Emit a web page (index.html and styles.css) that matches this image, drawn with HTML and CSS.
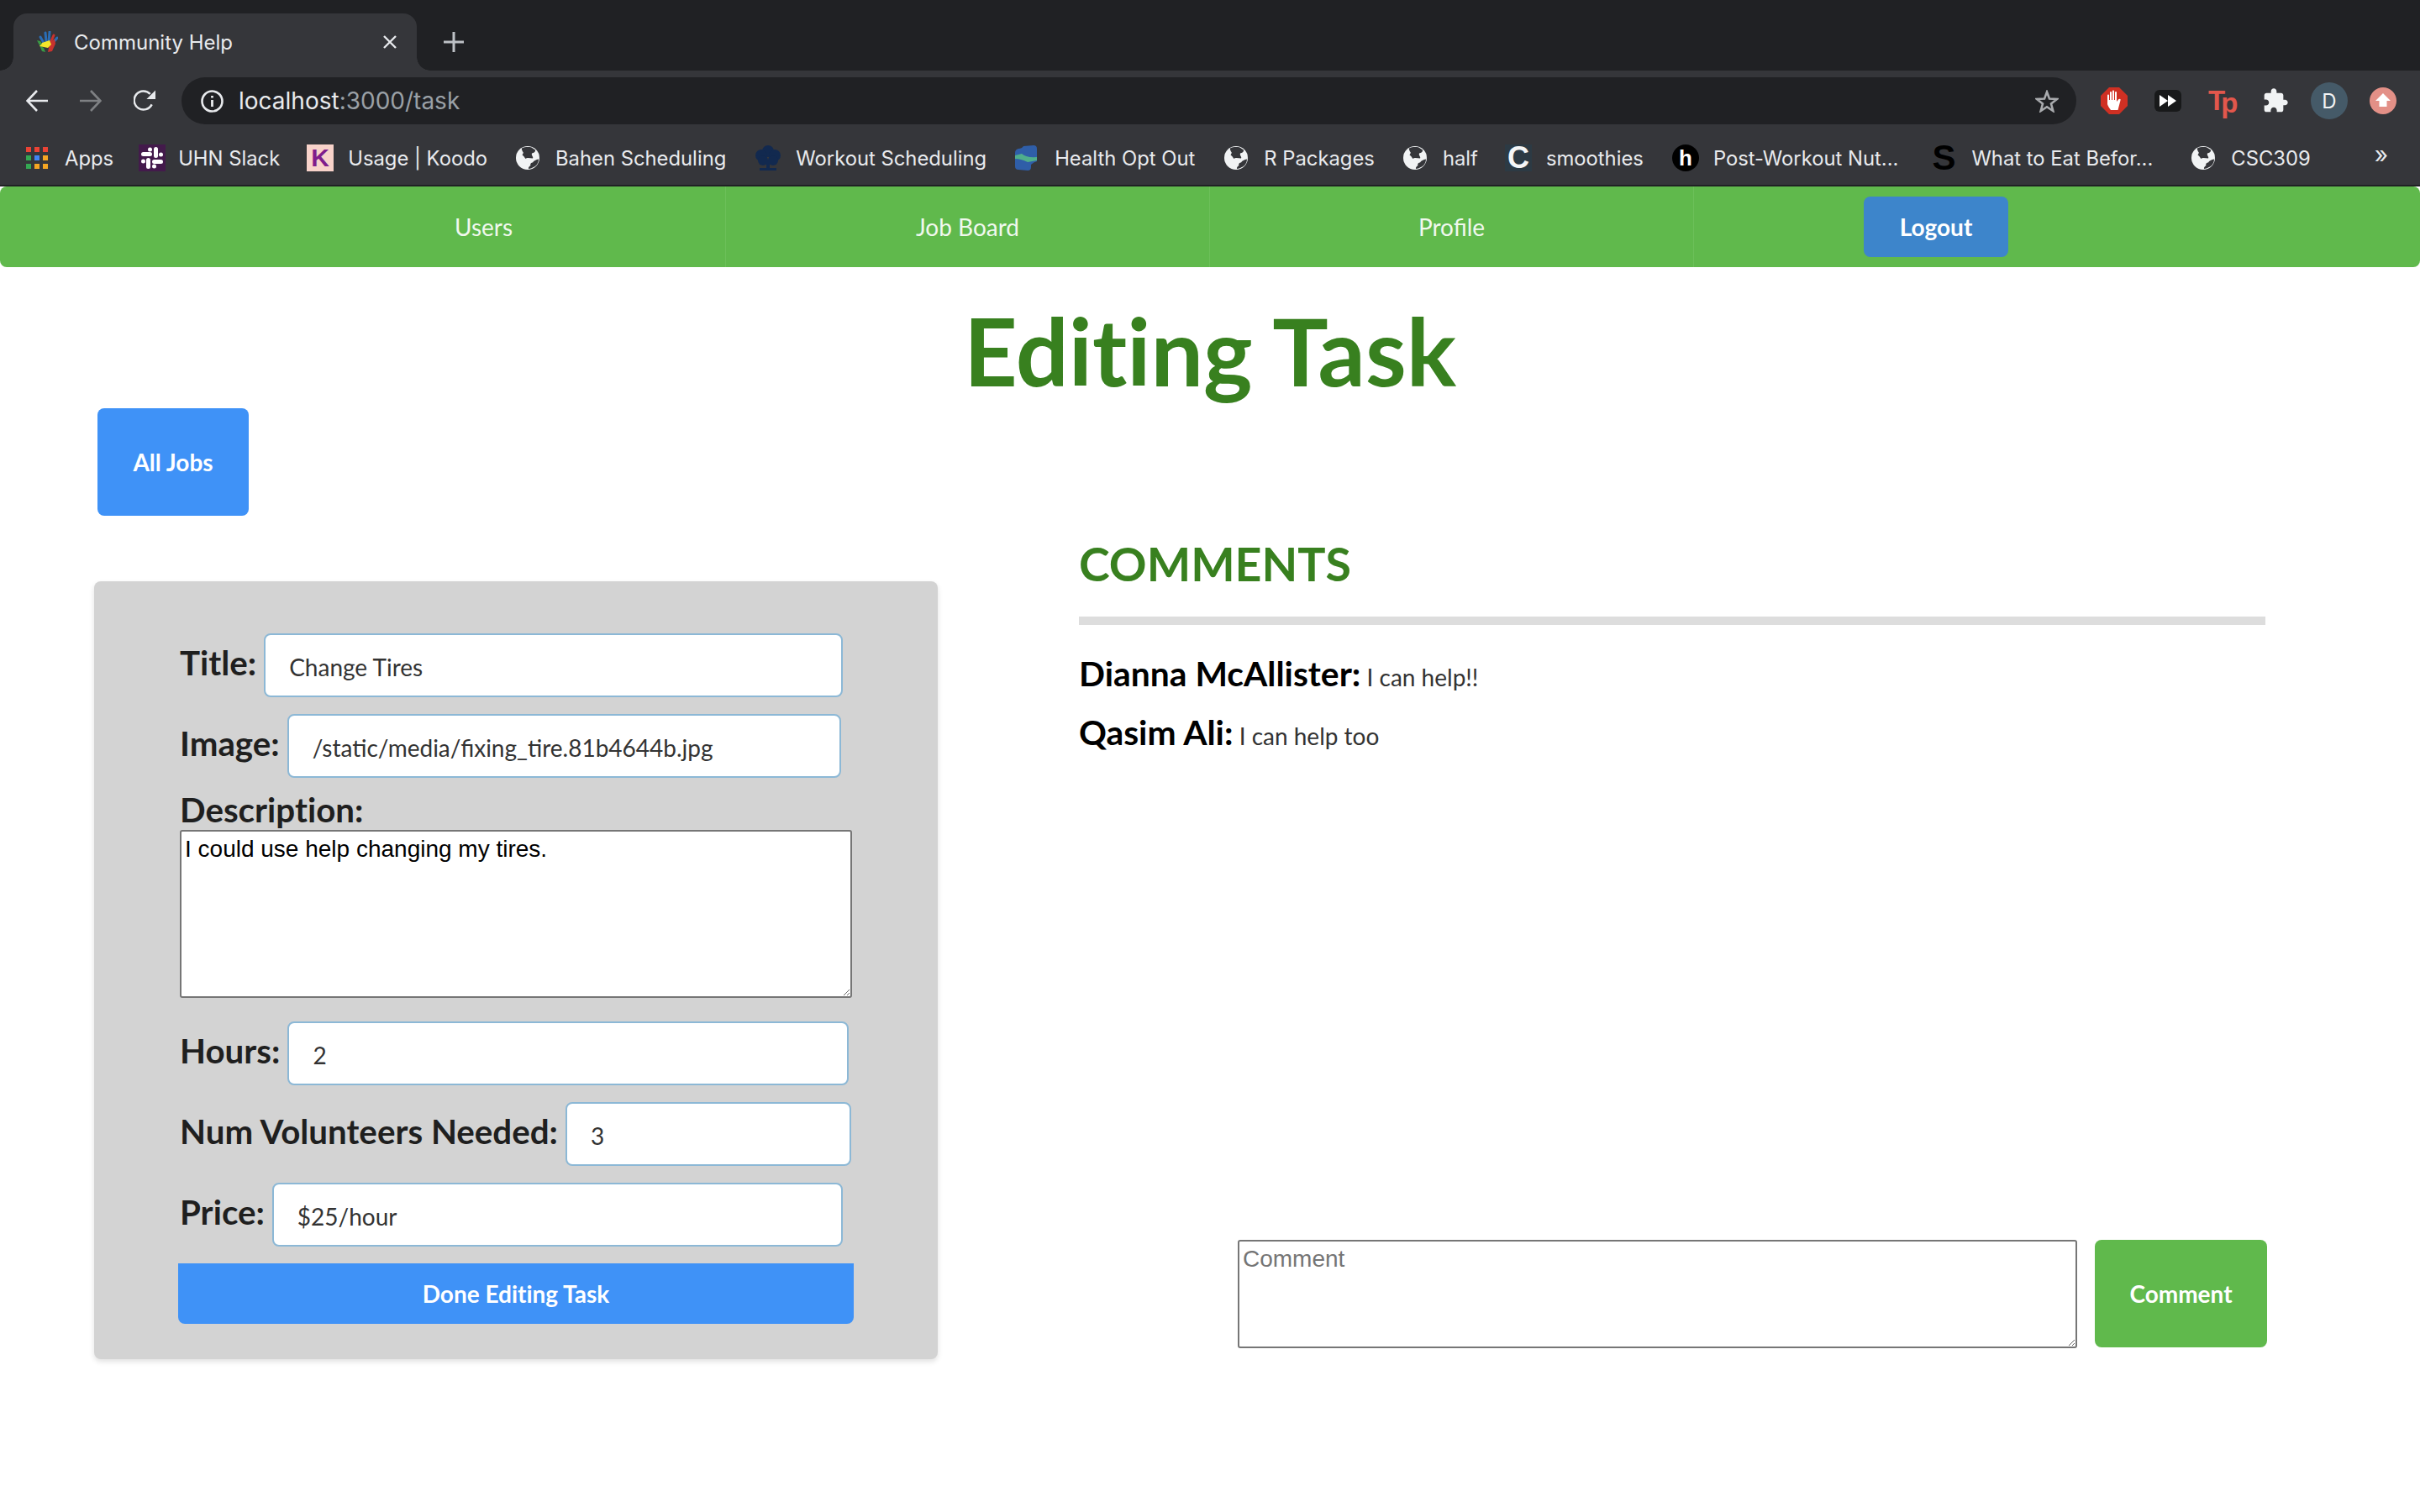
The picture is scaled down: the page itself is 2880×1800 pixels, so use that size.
FILE: index.html
```html
<!DOCTYPE html>
<html lang="en">
<head>
<meta charset="utf-8">
<title>Community Help</title>
<link rel="stylesheet" href="styles.css">
</head>
<body>
<svg class="defs" width="0" height="0" aria-hidden="true">
  <symbol id="globe" viewBox="0 0 28 28">
    <circle cx="14" cy="14" r="14" fill="#f1f3f4"/>
    <path d="M7 2.500C10 1 15 .8 18.500 1.500L23 4.500C23.500 7 21 8 19 8.500C18 11 21 12.500 20 14.500C17 14.500 13.500 13 11.500 15C10 13.500 9.500 11.500 7.500 10.500C8.500 8.500 9.500 7.500 8 6.500C7.500 5 6.500 4 7 2.500Z" fill="#35363a"/>
    <path d="M27 15.500C27 19 25 23 22 24.500C20 25.500 17 27 15 27C14.500 25 16 24 17.500 23C16.500 21 18.500 19.500 20 19.500C21 17.500 24 16 27 15.500Z" fill="#35363a"/>
  </symbol>
</svg>

<header class="browser">
  <div class="tabstrip">
    <div class="tab">
      <svg class="favicon" viewBox="0 0 25 26">
        <path d="M8 14 4 7" stroke="#2a6db5" stroke-width="3" stroke-linecap="round"/>
        <path d="M11 12 10 2" stroke="#2a6db5" stroke-width="3" stroke-linecap="round"/>
        <path d="M14 13 15 1" stroke="#2a6db5" stroke-width="3" stroke-linecap="round"/>
        <path d="M16 14 20 5" stroke="#c8322e" stroke-width="3" stroke-linecap="round"/>
        <path d="M18 15 24 8" stroke="#2a6db5" stroke-width="3" stroke-linecap="round"/>
        <path d="M15 15 21 9 22 15 18 24 13 25Z" fill="#c8322e"/>
        <path d="M3 17 8 20 10 25 6 24Z" fill="#3a9a46"/>
        <path d="M6 14 15 11 17 16 13 20 3 18Z" fill="#f3e62a"/>
        <path d="M0 11 4 12 6 15 3 17Z" fill="#3a9a46"/>
      </svg>
      <span class="tab-title">Community Help</span>
      <svg class="tab-close" viewBox="0 0 16 16"><path d="M1 1 15 15M15 1 1 15" stroke="#e8eaed" stroke-width="2.400"/></svg>
    </div>
    <svg class="new-tab" viewBox="0 0 24 24"><path d="M12 0V24M0 12H24" stroke="#bdc1c6" stroke-width="3"/></svg>
  </div>

  <div class="toolbar">
    <svg class="nav-icon" viewBox="0 0 26 26"><path d="M26 13H2M13 1 1.500 13 13 25" fill="none" stroke="#e8eaed" stroke-width="2.600"/></svg>
    <svg class="nav-icon" viewBox="0 0 26 26"><path d="M0 13H24M13 1 24.500 13 13 25" fill="none" stroke="#7f8184" stroke-width="2.600"/></svg>
    <svg class="nav-icon" viewBox="0 0 27 26"><path d="M22.500 17.500A11.500 11.500 0 1 1 20.500 4.500" fill="none" stroke="#e8eaed" stroke-width="2.600"/><path d="M27 0V11H16Z" fill="#e8eaed"/></svg>
    <div class="omnibox">
      <svg class="info" viewBox="0 0 27 27"><circle cx="13.500" cy="13.500" r="12" fill="none" stroke="#e8eaed" stroke-width="2.600"/><path d="M13.500 12V20M13.500 7V9.500" stroke="#e8eaed" stroke-width="2.800"/></svg>
      <span class="url">localhost<span class="url-rest">:3000/task</span></span>
      <svg class="star" viewBox="0 0 28 27"><path d="M14 2.500 17 10.600 26 11 19 16.500 21.300 25 14 20.200 6.700 25 9 16.500 2 11 11 10.600Z" fill="none" stroke="#a9abae" stroke-width="2.600"/></svg>
    </div>
    <div class="extensions">
      <svg class="ext" viewBox="0 0 32 32">
        <path d="M10 0H22L32 10V22L22 32H10L0 22V10Z" fill="#cf3023"/>
        <path d="M12 27C10 24 8.500 22 8 20V9.500C8 8 10 8 10 9.500V15H11V6C11 4.500 13 4.500 13 6V15H14V4.500C14 3 16 3 16 4.500V15H17V6C17 4.500 19 4.500 19 6V17L21 14.500C22 13 24.500 14 23.500 15.500L20.500 27Z" fill="#fff"/>
      </svg>
      <svg class="ext ext-ff" viewBox="0 0 32 26">
        <rect width="32" height="26" rx="6" fill="#18191a"/>
        <path d="M6 6 16 13 6 20ZM16 6 26 13 16 20Z" fill="#fff"/>
      </svg>
      <span class="ext ext-tp">T<span class="ext-tp-p">p</span></span>
      <svg class="ext" viewBox="0 0 24 24"><path d="M20.500 11H19V7c0-1.100-.9-2-2-2h-4V3.500C13 2.120 11.880 1 10.500 1S8 2.120 8 3.500V5H4c-1.100 0-1.990.9-1.990 2v3.800H3.500c1.490 0 2.700 1.210 2.700 2.700s-1.210 2.700-2.700 2.700H2V20c0 1.100.9 2 2 2h3.800v-1.500c0-1.490 1.210-2.700 2.700-2.700 1.490 0 2.700 1.210 2.700 2.700V22H17c1.100 0 2-.9 2-2v-4h1.500c1.380 0 2.500-1.120 2.500-2.500S21.880 11 20.500 11z" fill="#f1f3f4"/></svg>
      <span class="avatar">D</span>
      <svg class="ext" viewBox="0 0 32 32"><circle cx="16" cy="16" r="16" fill="#e39087"/><path d="M16 7 25 16H20.500V23H11.500V16H7Z" fill="#fff"/></svg>
    </div>
  </div>

  <nav class="bookmarks">
    <a class="bm">
      <svg class="bm-apps" viewBox="0 0 26 26">
        <rect width="6" height="6" fill="#ea4335"/><rect x="10" width="6" height="6" fill="#ea4335"/><rect x="20" width="6" height="6" fill="#ea4335"/>
        <rect y="10" width="6" height="6" fill="#34a853"/><rect x="10" y="10" width="6" height="6" fill="#4285f4"/><rect x="20" y="10" width="6" height="6" fill="#f5a623"/>
        <rect y="20" width="6" height="6" fill="#34a853"/><rect x="10" y="20" width="6" height="6" fill="#f5a623"/><rect x="20" y="20" width="6" height="6" fill="#f5a623"/>
      </svg>
      <span>Apps</span>
    </a>
    <a class="bm">
      <svg class="bm-icon bm-slack" viewBox="0 0 32 32">
        <rect width="32" height="32" fill="#431a4b"/>
        <g fill="#fff">
          <circle cx="13.500" cy="6" r="2.500"/><rect x="3" y="9" width="13" height="5" rx="2.500"/>
          <rect x="18" y="3" width="5" height="13" rx="2.500"/><circle cx="26.500" cy="12" r="2.500"/>
          <rect x="16" y="18" width="13" height="5" rx="2.500"/><circle cx="18.500" cy="26" r="2.500"/>
          <rect x="9" y="16" width="5" height="13" rx="2.500"/><circle cx="5.500" cy="20" r="2.500"/>
        </g>
      </svg>
      <span>UHN Slack</span>
    </a>
    <a class="bm"><span class="bm-letter bm-koodo">K</span><span>Usage | Koodo</span></a>
    <a class="bm"><svg class="bm-globe"><use href="#globe"/></svg><span>Bahen Scheduling</span></a>
    <a class="bm">
      <svg class="bm-icon" viewBox="0 0 32 32"><g fill="#12294f"><circle cx="16" cy="8" r="7"/><circle cx="8" cy="13" r="7"/><circle cx="24" cy="13" r="7"/><circle cx="10" cy="19" r="6"/><circle cx="22" cy="19" r="6"/><rect x="14" y="18" width="4" height="11"/><rect x="6" y="28" width="20" height="3"/></g></svg>
      <span>Workout Scheduling</span>
    </a>
    <a class="bm">
      <svg class="bm-icon bm-health" viewBox="0 0 26 30"><path d="M10 1 22 0Q26 0 26 4V14L12 16 0 17V9Q0 5 4 4 8 4 10 1Z" fill="#2f5ea8"/><path d="M0 14 26 12V19Q22 20 19 23V26Q19 30 15 30L4 29Q0 29 0 25Z" fill="#2f5ea8"/><path d="M0 12 8 10Q13 15 26 14V18L15 20Q7 16 0 16Z" fill="#4fae8c"/></svg>
      <span>Health Opt Out</span>
    </a>
    <a class="bm"><svg class="bm-globe"><use href="#globe"/></svg><span>R Packages</span></a>
    <a class="bm"><svg class="bm-globe"><use href="#globe"/></svg><span>half</span></a>
    <a class="bm"><span class="bm-letter bm-c">C</span><span>smoothies</span></a>
    <a class="bm"><span class="bm-letter bm-h">h</span><span>Post-Workout Nut...</span></a>
    <a class="bm"><span class="bm-letter bm-s">S</span><span>What to Eat Befor...</span></a>
    <a class="bm"><svg class="bm-globe"><use href="#globe"/></svg><span>CSC309</span></a>
    <span class="bm-more">»</span>
  </nav>
</header>

<div class="page">
  <nav class="appnav">
    <a class="appnav-item">Users</a>
    <a class="appnav-item">Job Board</a>
    <a class="appnav-item">Profile</a>
    <a class="appnav-item appnav-last"><span class="logout">Logout</span></a>
  </nav>

  <main>
    <h1 class="page-title">Editing Task</h1>
    <div class="columns">
      <section class="left">
        <button class="btn all-jobs">All Jobs</button>
        <form class="panel">
          <div class="row"><label>Title:</label><input class="field w-title" value="Change Tires"></div>
          <div class="row"><label>Image:</label><input class="field w-image" value="/static/media/fixing_tire.81b4644b.jpg"></div>
          <label class="desc-label">Description:</label>
          <textarea class="desc">I could use help changing my tires.</textarea>
          <div class="row"><label>Hours:</label><input class="field w-hours" value="2"></div>
          <div class="row"><label>Num Volunteers Needed:</label><input class="field w-num" value="3"></div>
          <div class="row"><label>Price:</label><input class="field w-price" value="$25/hour"></div>
          <button class="btn done" type="button">Done Editing Task</button>
        </form>
      </section>
      <section class="right">
        <h2 class="comments-title">COMMENTS</h2>
        <hr class="rule">
        <p class="comment"><strong>Dianna McAllister:</strong> I can help!!</p>
        <p class="comment"><strong>Qasim Ali:</strong> I can help too</p>
        <div class="comment-form">
          <textarea class="comment-input" placeholder="Comment"></textarea>
          <button class="btn comment-btn">Comment</button>
        </div>
      </section>
    </div>
  </main>
</div>
</body>
</html>
```

FILE: styles.css
```css
* { box-sizing: border-box; }
html, body { margin: 0; padding: 0; background: #fff; }
body { width: 2880px; height: 1800px; overflow: hidden; font-family: Lato, "Liberation Sans", sans-serif; }
.defs { display: block; height: 0; }

/* browser chrome */
.browser { font-family: Inter, "Liberation Sans", sans-serif; color: #e8eaed; background: #35363a; border-bottom: 2px solid #202124; height: 222px; }
.tabstrip { height: 84px; background: #202124; display: flex; align-items: flex-end; padding-left: 16px; }
.tab { position: relative; width: 480px; height: 68px; background: #35363a; border-radius: 16px 16px 0 0; display: flex; align-items: center; padding: 0 24px 0 28px; }
.tab::before, .tab::after { content: ""; position: absolute; bottom: 0; width: 16px; height: 16px; }
.tab::before { left: -16px; background: radial-gradient(circle at 0 0, #202124 15.500px, #35363a 16px); }
.tab::after { right: -16px; background: radial-gradient(circle at 100% 0, #202124 15.500px, #35363a 16px); }
.favicon { width: 25px; height: 26px; flex: none; }
.tab-title { margin-left: 19px; font-size: 24px; white-space: nowrap; flex: 1; }
.tab-close { width: 16px; height: 16px; flex: none; }
.new-tab { width: 24px; height: 24px; margin: 0 0 22px 32px; }

.toolbar { height: 72px; padding: 8px 0 8px 31px; display: flex; align-items: flex-start; }
.nav-icon { width: 26px; height: 26px; margin: 15px 38px 0 0; flex: none; }
.omnibox { width: 2255px; height: 56px; margin-left: -7px; background: #202124; border-radius: 28px; display: flex; align-items: center; padding: 0 21px 0 23px; flex: none; }
.info { width: 27px; height: 27px; flex: none; }
.url { margin-left: 18px; font-size: 28px; color: #e8eaed; flex: 1; }
.url-rest { color: #9aa0a6; }
.star { width: 28px; height: 27px; flex: none; }
.extensions { display: flex; align-items: center; height: 56px; margin-left: 29px; }
.ext { width: 32px; height: 32px; flex: none; margin-right: 32px; }
.ext:nth-child(4) { margin-right: 26px; }
.ext:last-child { margin-right: 0; }
.ext-ff { height: 26px; }
.ext-tp { font: 700 33px/32px "Liberation Sans", sans-serif; color: #e2574c; letter-spacing: -5px; white-space: nowrap; }
.ext-tp-p { position: relative; top: 3px; }
.avatar { width: 44px; height: 44px; border-radius: 50%; background: #455a68; color: #f1f3f4; font-size: 24px; display: flex; align-items: center; justify-content: center; margin-right: 26px; flex: none; }

.bookmarks { height: 64px; padding: 16px 0 0 31px; display: flex; align-items: flex-start; position: relative; }
.bm { display: flex; align-items: center; height: 32px; margin-right: 34px; font-size: 23.800px; color: #e8eaed; white-space: nowrap; flex: none; }
.bm:nth-child(1) { margin-right: 30px; }
.bm:nth-child(2), .bm:nth-child(8) { margin-right: 32px; }
.bm:nth-child(6) { margin-right: 35px; }
.bm:nth-child(10) { margin-right: 42px; }
.bm:nth-child(11) { margin-right: 46px; }
.bm-apps { width: 26px; height: 26px; margin-right: 20px; flex: none; }
.bm-icon { width: 32px; height: 32px; margin-right: 17px; flex: none; }
.bm-slack { margin-right: 15px; }
.bm-health { width: 26px; margin-right: 21px; }
.bm-globe { width: 28px; height: 28px; margin-right: 19px; flex: none; }
.bm-letter { width: 32px; height: 32px; margin-right: 17px; flex: none; display: flex; align-items: center; justify-content: center; font: 700 30px/32px "Liberation Sans", sans-serif; }
.bm-koodo { background: #f8d3ca; color: #7f1d8c; }
.bm-c { background: #2c3a44; color: #f5f6f7; font-size: 36px; }
.bm-h { background: #000; color: #fff; border-radius: 50%; font-size: 26px; }
.bm-s { background: none; color: #000; width: 24px; margin-right: 21px; font: 900 42px/32px "Liberation Sans", sans-serif; }
.bm-more { position: absolute; right: 38px; top: 12px; font-size: 28px; line-height: 32px; color: #e8eaed; }

/* app nav */
.appnav { height: 96px; background: #60b94c; border-radius: 8px; padding-left: 288px; display: flex; }
.appnav-item { width: 576px; display: flex; align-items: center; justify-content: center; font-size: 28px; color: #f0f8ee; border-right: 1px solid #6cc059; }
.appnav-last { border-right: 0; }
.logout { width: 172px; height: 72px; background: #3d85cb; color: #fff; font-weight: 700; border-radius: 8px; display: flex; align-items: center; justify-content: center; }

/* page */
.page-title { margin: 0; height: 168px; text-align: center; font-size: 111px; line-height: 198px; font-weight: 700; color: #38801f; font-variant-ligatures: none; }
.columns { display: grid; grid-template-columns: 1284px 1414px; align-items: stretch; }
.left { padding-left: 112px; }
.btn { border: 0; border-radius: 8px; font-family: Lato, sans-serif; font-size: 28px; font-weight: 700; color: #fff; background: #3f92f7; display: block; }
.all-jobs { width: 180px; height: 128px; margin: 0 0 78px 4px; }
.panel { width: 1004px; height: 926px; background: #d3d3d3; border-radius: 8px; padding: 62px 0 0 102px; box-shadow: 0 3px 6px rgba(0,0,0,.12); }
.row { display: flex; align-items: center; height: 76px; margin-bottom: 20px; }
.row label, .desc-label { font-size: 40.300px; font-weight: 700; color: #1f1f1f; line-height: 48px; font-variant-ligatures: none; }
.row label { margin: -7px 9px 0 0; white-space: nowrap; }
.field { height: 76px; border: 2px solid #8cb8d6; border-radius: 8px; background: #fff; padding: 4px 0 0 28px; font: 28px Lato, sans-serif; color: #333; outline: 0; flex: none; }
.w-title { width: 689px; }
.w-image { width: 659px; }
.w-hours { width: 668px; }
.w-num { width: 340px; }
.w-price { width: 679px; }
.desc-label { display: block; height: 48px; margin-top: -6px; }
.desc { display: block; width: 800px; height: 200px; margin-bottom: 28px; border: 2px solid #767676; border-radius: 3px; padding: 4px; font: 28px/34px "Liberation Sans", sans-serif; color: #000; background: #fff; outline: 0; }
.done { width: 804px; height: 72px; margin: 0 0 0 -2px; border-radius: 0 0 8px 8px; font-variant-ligatures: none; }

.right { display: flex; flex-direction: column; padding-bottom: 13px; }
.comments-title { margin: 151px 0 0; font-size: 55.500px; line-height: 68px; font-weight: 700; color: #38801f; }
.rule { width: 1412px; height: 10px; margin: 29px 0 33px; border: 0; background: #ddd; }
.comment { margin: 0 0 16px; font-size: 28px; line-height: 50px; color: #333; }
.comment strong { font-size: 40.800px; font-weight: 700; color: #000; }
.comment-form { margin-top: auto; display: flex; justify-content: flex-end; gap: 21px; align-items: flex-start; }
.comment-input { width: 999px; height: 129px; border: 2px solid #767676; border-radius: 3px; padding: 4px; font: 28px/34px "Liberation Sans", sans-serif; outline: 0; }
.comment-input::placeholder { color: #757575; }
.comment-btn { width: 205px; height: 128px; background: #60b94c; }
```
